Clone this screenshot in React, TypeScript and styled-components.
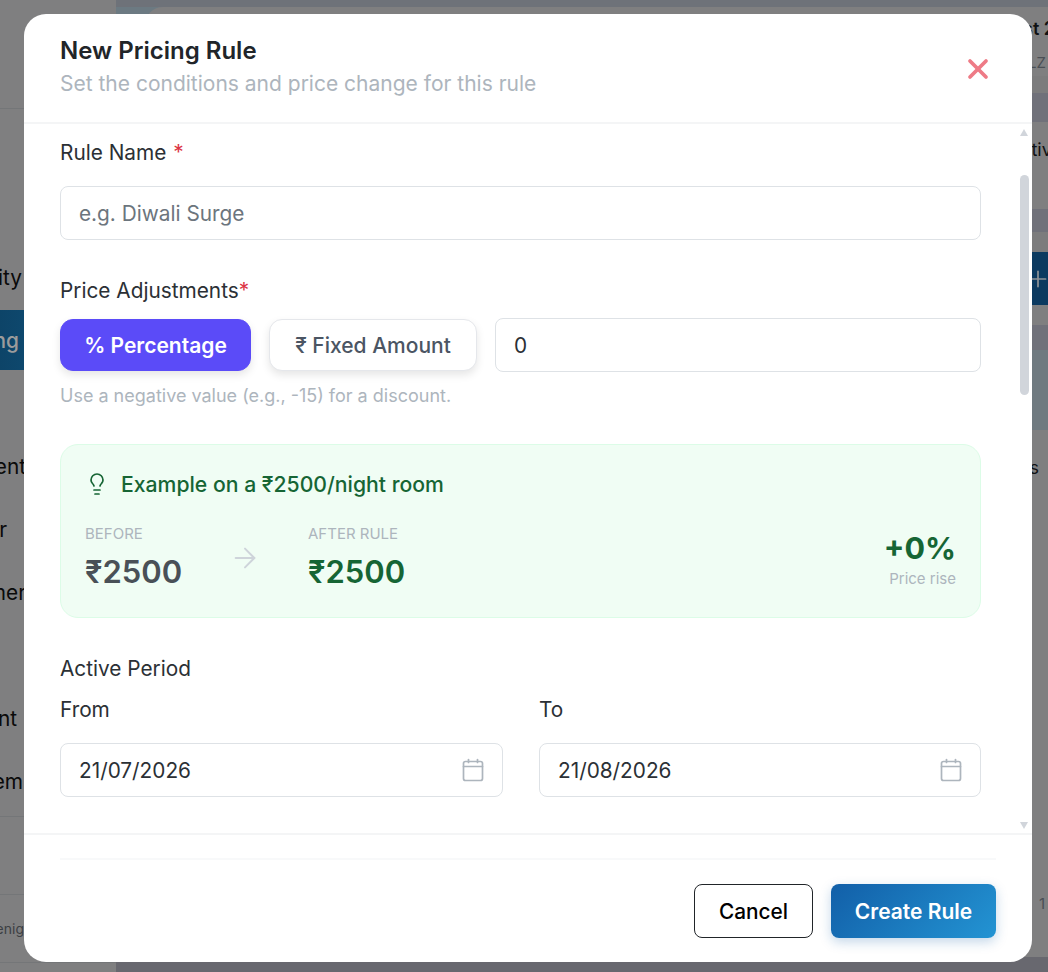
import React from 'react'
import { ArrowRight, Lightbulb, Plus, X } from 'lucide-react'
import styled, { createGlobalStyle } from 'styled-components'

const GlobalStyle = createGlobalStyle`
  html, body {
    margin: 0;
    padding: 0;
    height: 100%;
    overflow: hidden;
    background: #7f7f80;
    font-family: Inter, "Liberation Sans", sans-serif;
    color: #2b3035;
  }

  #root {
    position: relative;
    width: 1048px;
    height: 972px;
    overflow: hidden;
  }

  * {
    box-sizing: border-box;
  }
`

// the page behind the modal, in its dimmed colours
const Page = styled.div`
  display: grid;
  grid-template-columns: 116px 1fr;
  width: 1048px;
  height: 972px;
  overflow: hidden;
`

const Sidebar = styled.aside`
  display: flex;
  flex-direction: column;
  height: 100%;
  background: #7f7f80;
`

const SideBrand = styled.div`
  height: 109px;
  border-bottom: 1px solid #747678;
  margin-bottom: 138px;
`

const NavList = styled.nav`
  display: flex;
  flex-direction: column;
  gap: 3px;
`

const NavItem = styled.div<{ $active?: boolean; $end?: number }>`
  display: flex;
  justify-content: flex-end;
  align-items: center;
  width: ${({ $end }) => $end ?? 24}px;
  height: 60px;
  font-size: 20.8px;
  font-weight: ${({ $active }) => ($active ? 500 : 400)};
  white-space: nowrap;
  color: ${({ $active }) => ($active ? '#9c9c9c' : '#0a0a0a')};
`

const ActiveBand = styled.div`
  display: flex;
  height: 60px;
  background: linear-gradient(90deg, #0d4468, #125782);
`

const SideFooter = styled.div`
  display: flex;
  flex-direction: column;
  margin-top: 5px;
`

const SideDivider = styled.div<{ $h: number }>`
  height: ${({ $h }) => $h}px;
  border-bottom: 1px solid #747678;
`

const SideCredit = styled.div`
  display: flex;
  justify-content: flex-end;
  align-items: center;
  width: 24px;
  height: 67px;
  font-size: 14px;
  white-space: nowrap;
  color: #3c4044;
`

const Main = styled.main`
  display: flex;
  flex-direction: column;
  height: 100%;
  background: #7f7f80;
`

const TopSection = styled.div`
  display: flex;
  flex-direction: column;
  padding-left: 29px;
  background: #6c7a82;
`

const TopCard = styled.div`
  border-top-left-radius: 18px;
  overflow: hidden;
`

const Band = styled.div<{ $h: number; $bg?: string }>`
  display: flex;
  justify-content: flex-end;
  align-items: center;
  flex-shrink: 0;
  height: ${({ $h }) => $h}px;
  background: ${({ $bg }) => $bg ?? '#7f7f80'};
  white-space: nowrap;
`

const BandText = styled.span<{ $muted?: boolean; $bold?: boolean; $shift?: number }>`
  margin-right: ${({ $shift }) => $shift ?? 0}px;
  font-size: ${({ $muted }) => ($muted ? 15 : 18)}px;
  font-weight: ${({ $bold }) => ($bold ? 600 : 400)};
  color: ${({ $muted }) => ($muted ? '#4a4f55' : '#0f1113')};
`

const PlusIcon = styled(Plus)`
  margin-right: -3px;
  color: #8d9296;
`

const ModalLayer = styled.div`
  position: absolute;
  inset: 0;
  z-index: 10;
  display: flex;
  align-items: flex-start;
  padding: 14px 0 0 24px;
`

const Modal = styled.div`
  display: flex;
  flex-direction: column;
  width: 1008px;
  height: 948px;
  overflow: hidden;
  border-radius: 22px;
  background: #fff;
`

const Header = styled.header`
  display: flex;
  align-items: center;
  justify-content: space-between;
  height: 110px;
  flex-shrink: 0;
  padding: 0 38px 2px 36px;
  border-bottom: 2px solid #f4f5f6;
`

const Title = styled.h2`
  margin: 0 0 3px;
  font-size: 24px;
  line-height: 30px;
  font-weight: 600;
  color: #212529;
`

const Subtitle = styled.p`
  margin: 0;
  font-size: 21px;
  line-height: 30px;
  color: #adb5bd;
`

const CloseIcon = styled(X)`
  display: block;
  margin-top: 4px;
  color: #ee7b86;
`

const Body = styled.div`
  position: relative;
  flex: 0 0 711px;
  height: 711px;
  overflow: hidden;
  padding: 14px 51px 0 36px;
  border-bottom: 2px solid #f4f5f6;
`

const ScrollTrack = styled.div`
  position: absolute;
  top: 0;
  right: 3px;
  bottom: 0;
  width: 9px;
`

const ScrollArrowUp = styled.div`
  position: absolute;
  top: 5px;
  left: 0;
  border-left: 4.5px solid transparent;
  border-right: 4.5px solid transparent;
  border-bottom: 7px solid #d1d5db;
`

const ScrollArrowDown = styled.div`
  position: absolute;
  bottom: 4px;
  left: 0;
  border-left: 4.5px solid transparent;
  border-right: 4.5px solid transparent;
  border-top: 7px solid #d1d5db;
`

const ScrollThumb = styled.div`
  position: absolute;
  top: 51px;
  left: 0;
  width: 9px;
  height: 220px;
  border-radius: 5px;
  background: #d1d5db;
`

const FieldLabel = styled.div`
  font-size: 20.8px;
  line-height: 30px;
  color: #2b3035;
`

const Required = styled.span<{ $tight?: boolean }>`
  margin-left: ${({ $tight }) => ($tight ? 0 : 1)}px;
  color: #dc3545;
`

const Input = styled.div<{ $muted?: boolean }>`
  display: flex;
  align-items: center;
  justify-content: space-between;
  height: 54px;
  padding: 0 18px;
  border: 1px solid #dee2e6;
  border-radius: 8px;
  background: #fff;
  font-size: 20.8px;
  color: ${({ $muted }) => ($muted ? '#6c757d' : '#2b3035')};
`

const NameInput = styled(Input)`
  margin: 18px 0 36px;
`

const AdjustRow = styled.div`
  display: flex;
  align-items: center;
  gap: 18px;
  margin-top: 12px;
`

const ToggleButton = styled.button<{ $active?: boolean; $w: number }>`
  width: ${({ $w }) => $w}px;
  height: 52px;
  padding: 0;
  flex-shrink: 0;
  border: 1px solid ${({ $active }) => ($active ? '#5b4bf8' : '#e5e7eb')};
  border-radius: 13px;
  font-family: inherit;
  font-size: 21px;
  font-weight: ${({ $active }) => ($active ? 600 : 500)};
  color: ${({ $active }) => ($active ? '#fff' : '#4b5563')};
  background: ${({ $active }) => ($active ? '#5b4bf8' : '#fff')};
  box-shadow: 0 4px 8px rgba(0, 0, 0, 0.1);
`

const AmountInput = styled(Input)`
  flex: 1;
`

const Hint = styled.p`
  margin: 11px 0 35px;
  font-size: 18px;
  line-height: 26px;
  color: #adb5bd;
`

const ExampleCard = styled.section`
  display: flex;
  flex-direction: column;
  height: 174px;
  padding: 24px 24px 0;
  border: 1px solid #dcfce7;
  border-radius: 18px;
  background: #f0fdf4;
`

const ExampleTitle = styled.div`
  display: flex;
  align-items: center;
  gap: 12px;
  height: 30px;
  font-size: 21.2px;
  font-weight: 500;
  color: #166534;
`

const BulbIcon = styled(Lightbulb)`
  color: #166534;
`

const ExampleRow = styled.div`
  display: flex;
  align-items: center;
  margin-top: 24px;
`

const PriceColumn = styled.div<{ $w?: number }>`
  display: flex;
  flex-direction: column;
  width: ${({ $w }) => ($w ? `${$w}px` : 'auto')};
`

const PriceLabel = styled.div`
  font-size: 15px;
  line-height: 22px;
  color: #adb5bd;
`

const PriceValue = styled.div<{ $green?: boolean }>`
  margin-top: 8px;
  font-size: 31px;
  line-height: 38px;
  font-weight: 600;
  color: ${({ $green }) => ($green ? '#166534' : '#495057')};
`

const ArrowIcon = styled(ArrowRight)`
  flex-shrink: 0;
  margin: 2px 47px 0 0;
  color: #ced4da;
`

const RiseColumn = styled.div`
  display: flex;
  flex-direction: column;
  align-items: flex-end;
  margin-left: auto;
  margin-top: 5px;
`

const RiseValue = styled.div`
  font-size: 30.5px;
  line-height: 36px;
  font-weight: 700;
  color: #166534;
`

const RiseLabel = styled.div`
  margin-top: 3px;
  font-size: 15px;
  line-height: 20px;
  color: #adb5bd;
`

const PeriodLabel = styled(FieldLabel)`
  margin-top: 36px;
`

const PeriodGrid = styled.div`
  display: grid;
  grid-template-columns: 443px 442px;
  column-gap: 36px;
  margin-top: 11px;
`

const PeriodField = styled.div`
  display: flex;
  flex-direction: column;
  gap: 18px;
`

const CalendarSvg = styled.svg`
  flex-shrink: 0;
  margin-right: -2px;
  color: #adb5bd;
`

const Footer = styled.footer`
  display: flex;
  flex-direction: column;
  flex: 1;
  padding: 23px 36px 0;
`

const FooterActions = styled.div`
  display: flex;
  justify-content: flex-end;
  gap: 18px;
  padding-top: 24px;
  border-top: 2px solid #f8f9fa;
`

const CancelButton = styled.button`
  width: 119px;
  height: 54px;
  border: 1px solid #212529;
  border-radius: 8px;
  background: #fff;
  font-family: inherit;
  font-size: 20.8px;
  font-weight: 500;
  color: #000;
`

const CreateButton = styled.button`
  width: 165px;
  height: 54px;
  border: none;
  border-radius: 8px;
  background: linear-gradient(135deg, #125fa8, #2394d3);
  box-shadow: 0 4px 12px rgba(18, 95, 168, 0.25);
  font-family: inherit;
  font-size: 21px;
  font-weight: 600;
  color: #fff;
`

const navAbove = [{ label: 'Availability', end: 22 }]
const navBelow = [
  { label: 'Payment', end: 26 },
  { label: 'Partner', end: 7 },
  { label: 'Customer', end: 26 },
]
const navLast = [
  { label: 'Management', end: 17 },
  { label: 'System', end: 23 },
]

const CalendarIcon = () => (
  <CalendarSvg
    width="26"
    height="26"
    viewBox="0 0 26 26"
    fill="none"
    stroke="currentColor"
    strokeWidth="1.7"
    strokeLinecap="round"
  >
    <rect x="3.5" y="4.5" width="19" height="19" rx="2" />
    <path d="M3.5 9.5h19" />
    <path d="M8.5 2.5v3" />
    <path d="M17.5 2.5v3" />
  </CalendarSvg>
)

const BackgroundPage = () => (
  <Page>
    <Sidebar>
      <SideBrand />
      <NavList>
        {navAbove.map((item) => (
          <NavItem key={item.label} $end={item.end}>
            {item.label}
          </NavItem>
        ))}
        <ActiveBand>
          <NavItem $active $end={19}>
            Pricing
          </NavItem>
        </ActiveBand>
        <NavItem />
        {navBelow.map((item) => (
          <NavItem key={item.label} $end={item.end}>
            {item.label}
          </NavItem>
        ))}
        <NavItem />
        {navLast.map((item) => (
          <NavItem key={item.label} $end={item.end}>
            {item.label}
          </NavItem>
        ))}
      </NavList>
      <SideFooter>
        <SideDivider $h={1} />
        <SideDivider $h={78} />
        <SideCredit>Powered by Stayenig</SideCredit>
        <SideDivider $h={1} />
      </SideFooter>
    </Sidebar>
    <Main>
      <Band $h={7} $bg="#6e7279" />
      <TopSection>
        <TopCard>
          <Band $h={42}>
            <BandText $bold $shift={-7}>
              Last 2
            </BandText>
          </Band>
          <Band $h={27}>
            <BandText $muted $shift={2}>
              ID_LZ
            </BandText>
          </Band>
        </TopCard>
      </TopSection>
      <Band $h={17} $bg="#7c7c7d" />
      <Band $h={29} $bg="#70717a" />
      <Band $h={55}>
        <BandText $shift={-14}>Active</BandText>
      </Band>
      <Band $h={32} />
      <Band $h={23} $bg="#70717a" />
      <Band $h={20} $bg="#7c7c7d" />
      <Band $h={53} $bg="#0c3a60">
        <PlusIcon size={26} strokeWidth={1.6} />
      </Band>
      <Band $h={20} />
      <Band $h={25} $bg="#70717a" />
      <Band $h={80} $bg="#6f7a80" />
      <Band $h={74}>
        <BandText $shift={9}>s</BandText>
      </Band>
      <Band $h={380} />
      <Band $h={38}>
        <BandText $muted $shift={3}>
          1
        </BandText>
      </Band>
      <Band $h={35} />
      <Band $h={15} $bg="#68686f" />
    </Main>
  </Page>
)

const App = () => {
  return (
    <>
      <GlobalStyle />
      <BackgroundPage />
      <ModalLayer>
        <Modal>
          <Header>
            <div>
              <Title>New Pricing Rule</Title>
              <Subtitle>Set the conditions and price change for this rule</Subtitle>
            </div>
            <CloseIcon size={32} strokeWidth={2.8} />
          </Header>
          <Body>
            <FieldLabel>
              Rule Name <Required>*</Required>
            </FieldLabel>
            <NameInput $muted>e.g. Diwali Surge</NameInput>
            <FieldLabel>
              Price Adjustments<Required $tight>*</Required>
            </FieldLabel>
            <AdjustRow>
              <ToggleButton $active $w={191}>
                % Percentage
              </ToggleButton>
              <ToggleButton $w={208}>₹ Fixed Amount</ToggleButton>
              <AmountInput>0</AmountInput>
            </AdjustRow>
            <Hint>Use a negative value (e.g., -15) for a discount.</Hint>
            <ExampleCard>
              <ExampleTitle>
                <BulbIcon size={24} strokeWidth={1.7} />
                Example on a ₹2500/night room
              </ExampleTitle>
              <ExampleRow>
                <PriceColumn $w={144}>
                  <PriceLabel>BEFORE</PriceLabel>
                  <PriceValue>₹2500</PriceValue>
                </PriceColumn>
                <ArrowIcon size={32} strokeWidth={1.5} />
                <PriceColumn>
                  <PriceLabel>AFTER RULE</PriceLabel>
                  <PriceValue $green>₹2500</PriceValue>
                </PriceColumn>
                <RiseColumn>
                  <RiseValue>+0%</RiseValue>
                  <RiseLabel>Price rise</RiseLabel>
                </RiseColumn>
              </ExampleRow>
            </ExampleCard>
            <PeriodLabel>Active Period</PeriodLabel>
            <PeriodGrid>
              <PeriodField>
                <FieldLabel>From</FieldLabel>
                <Input>
                  21/07/2026
                  <CalendarIcon />
                </Input>
              </PeriodField>
              <PeriodField>
                <FieldLabel>To</FieldLabel>
                <Input>
                  21/08/2026
                  <CalendarIcon />
                </Input>
              </PeriodField>
            </PeriodGrid>
            <ScrollTrack>
              <ScrollArrowUp />
              <ScrollThumb />
              <ScrollArrowDown />
            </ScrollTrack>
          </Body>
          <Footer>
            <FooterActions>
              <CancelButton>Cancel</CancelButton>
              <CreateButton>Create Rule</CreateButton>
            </FooterActions>
          </Footer>
        </Modal>
      </ModalLayer>
    </>
  )
}

export default App
